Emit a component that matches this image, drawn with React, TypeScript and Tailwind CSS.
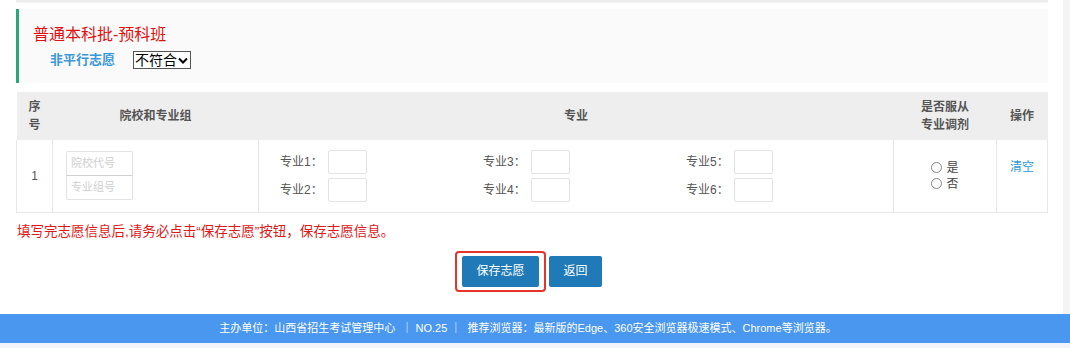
import React from "react";

const FONT = {
  fontFamily: '"Liberation Sans", "Noto Sans CJK SC", sans-serif',
};

function MajorInput({ label }: { label: string }) {
  return (
    <div className="flex h-[24px] items-center">
      <span className="w-[48px] text-[12px] text-[#555]">{label}</span>
      <span className="h-[24px] w-[39px] rounded-[2px] border border-[#e3e3e3] bg-white" />
    </div>
  );
}

function Radio({ label }: { label: string }) {
  return (
    <div className="flex h-[16px] items-center gap-[4px] text-[12px] text-[#444]">
      <span className="h-[11px] w-[11px] rounded-full border border-[#888] bg-white" />
      {label}
    </div>
  );
}

export default function App() {
  return (
    <div className="relative h-[348px] w-[1070px] overflow-hidden bg-white" style={FONT}>
      <div className="flex">
        <div className="w-[1063px] pl-[16px] pr-[15px]">
          <div className="h-[2px] bg-[#ececec] shadow-[0_1px_2px_rgba(0,0,0,0.06)]" />

          {/* batch header */}
          <div className="mt-[7px] h-[74px] border-l-[3px] border-[#2aa57c] bg-[#fafafa] pl-[14px] pt-[16px]">
            <div className="text-[16px] leading-[20px] text-[#e01010]">普通本科批-预科班</div>
            <div className="mt-[6px] flex items-center pl-[17px]">
              <span className="text-[13px] font-bold leading-[18px] text-[#3a98d8]">非平行志愿</span>
              <span className="ml-[18px] flex h-[18px] w-[58px] items-center justify-between border border-[#555] bg-white pl-[1px] pr-[2px] text-[14px] leading-[16px] text-black">
                不符合
                <svg width="10" height="7" viewBox="0 0 10 7">
                  <path d="M1 1.5 L5 5.5 L9 1.5" stroke="#000" strokeWidth="2" fill="none" />
                </svg>
              </span>
            </div>
          </div>

          {/* volunteer table */}
          <table className="mt-[9px] w-[1032px] border-collapse text-[12px] text-[#555]">
            <thead>
              <tr className="h-[48px] bg-[#eeeeee] text-[#555]">
                <th className="w-[36px] px-[10px] leading-[18px] font-semibold">序号</th>
                <th className="w-[206px] font-semibold">院校和专业组</th>
                <th className="w-[635px] font-semibold">专业</th>
                <th className="w-[103px] leading-[18px] font-semibold">
                  是否服从
                  <br />
                  专业调剂
                </th>
                <th className="font-semibold">操作</th>
              </tr>
            </thead>
            <tbody>
              <tr className="h-[72px] border-b border-[#e8e8e8]">
                <td className="border-x border-[#e8e8e8] text-center">1</td>
                <td className="border-r border-[#e8e8e8] pl-[13px]">
                  <div className="flex w-[67px] flex-col">
                    <span className="h-[25px] rounded-t-[2px] border border-[#e3e3e3] border-b-[#d0d0d0] pl-[4px] text-[11px] leading-[23px] text-[#cfcfcf]">
                      院校代号
                    </span>
                    <span className="h-[24px] rounded-b-[2px] border border-t-0 border-[#e3e3e3] pl-[4px] text-[11px] leading-[23px] text-[#cfcfcf]">
                      专业组号
                    </span>
                  </div>
                </td>
                <td className="border-r border-[#e8e8e8] pl-[21px]">
                  <div className="grid grid-cols-[203px_203px_203px]">
                    {[
                      ["专业1：", "专业2："],
                      ["专业3：", "专业4："],
                      ["专业5：", "专业6："],
                    ].map((pair) => (
                      <div key={pair[0]} className="flex flex-col gap-[4px]">
                        <MajorInput label={pair[0]} />
                        <MajorInput label={pair[1]} />
                      </div>
                    ))}
                  </div>
                </td>
                <td className="border-r border-[#e8e8e8]">
                  <div className="flex flex-col items-center">
                    <Radio label="是" />
                    <Radio label="否" />
                  </div>
                </td>
                <td className="border-r border-[#e8e8e8] pb-[18px] text-center text-[12px] text-[#2a9ad6]">清空</td>
              </tr>
            </tbody>
          </table>

          <div className="mt-[10px] pl-[1px] text-[13.5px] leading-[18px] text-[#e01818]">
            填写完志愿信息后,请务必点击“保存志愿”按钮，保存志愿信息。
          </div>

          <div className="mt-[15px] flex justify-center gap-[10px]">
            <div className="relative">
              <button className="h-[31px] w-[77px] rounded-[2px] bg-[#1f7ab7] text-[12px] text-white">保存志愿</button>
              <span className="pointer-events-none absolute -inset-x-[7px] -inset-y-[5px] rounded-[4px] border-2 border-[#e8332a]" />
            </div>
            <button className="h-[31px] w-[53px] rounded-[2px] bg-[#1f7ab7] text-[12px] text-white">返回</button>
          </div>
        </div>
        <div className="h-[314px] w-[7px] bg-[#f4f4f4]" />
      </div>

      <div className="flex h-[29px] items-center justify-center bg-[#4a97f0] pr-[14px] text-[11px] text-white">
        主办单位：山西省招生考试管理中心&nbsp;&nbsp;｜ NO.25 ｜&nbsp;&nbsp;推荐浏览器：最新版的Edge、360安全浏览器极速模式、Chrome等浏览器。
      </div>
      <div className="h-[5px] bg-[#f3f4fb]" />
    </div>
  );
}
